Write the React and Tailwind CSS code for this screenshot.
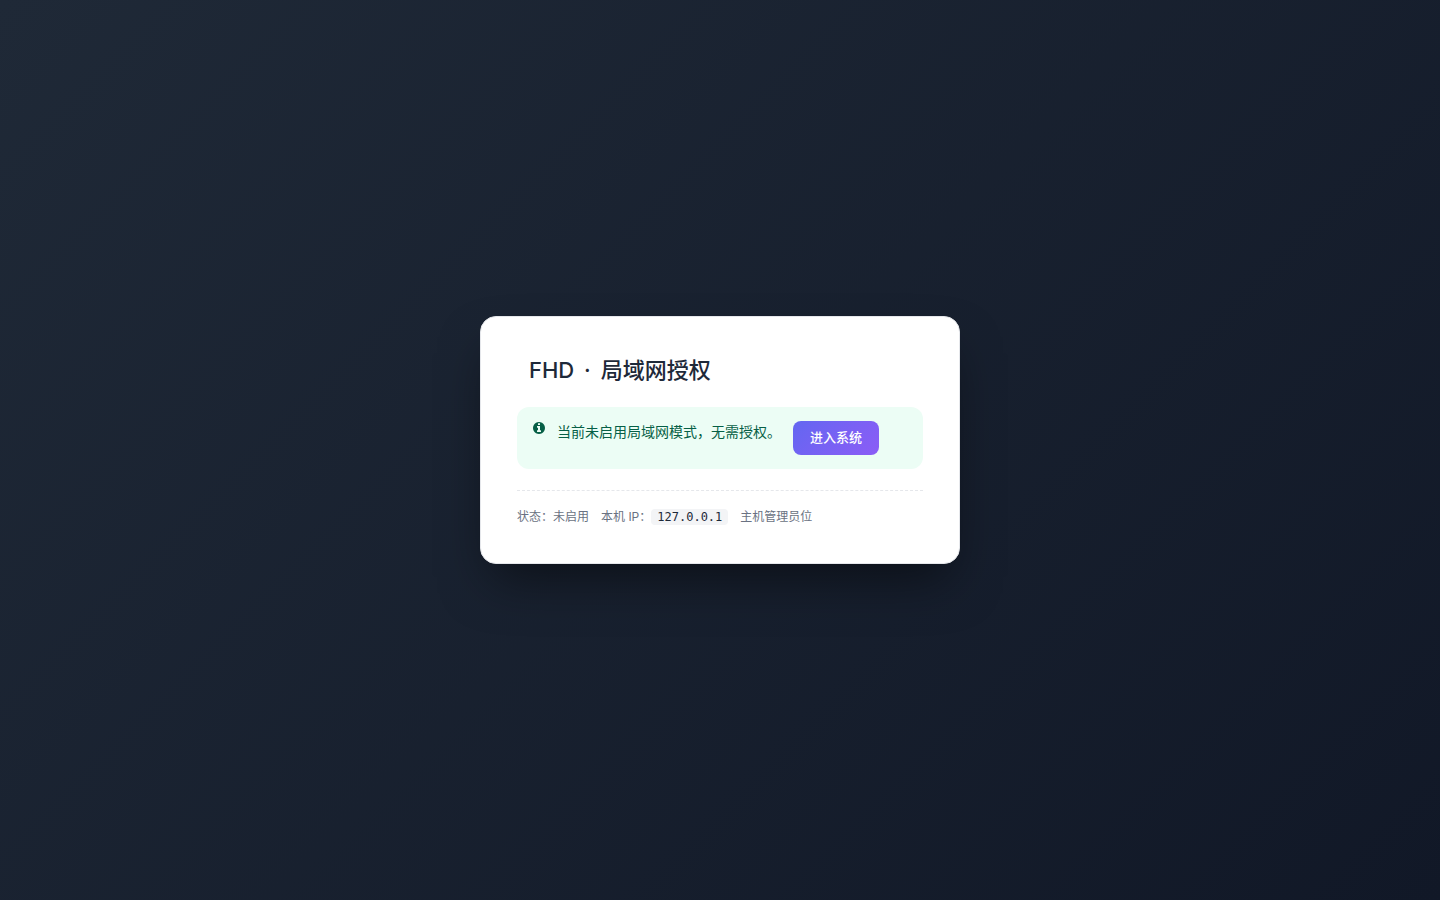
import React from 'react';

function InfoIcon() {
  return (
    <svg viewBox="128 128 1536 1536" className="mt-px h-3 w-3 shrink-0" fill="currentColor" fillRule="evenodd" aria-hidden="true">
      <path d="M1152 1376v-160q0-14-9-23t-23-9h-96v-512q0-14-9-23t-23-9h-320q-14 0-23 9t-9 23v160q0 14 9 23t23 9h96v320h-96q-14 0-23 9t-9 23v160q0 14 9 23t23 9h448q14 0 23-9t9-23zM1024 480v-160q0-14-9-23t-23-9h-192q-14 0-23 9t-9 23v160q0 14 9 23t23 9h192q14 0 23-9t9-23zM1664 896q0 209-103 385.500t-279.500 279.500-385.500 103-385.500-103-279.500-279.500-103-385.500 103-385.500 279.500-279.500 385.500-103 385.500 103 279.500 279.500 103 385.500z" />
    </svg>
  );
}

export default function App() {
  return (
    <div className="flex min-h-screen items-center justify-center bg-[linear-gradient(135deg,#1f2937,#111827)] px-4 pb-5 font-['Inter','Noto_Sans_CJK_SC',sans-serif]">
      <main className="w-full max-w-[480px] rounded-2xl border border-gray-200 bg-white p-9 shadow-2xl shadow-black/50">
        <h1 className="mb-5 pl-3 text-[22px] leading-[34px] font-medium text-gray-800">
          FHD <span className="px-1">·</span> 局域网授权
        </h1>

        <div className="flex items-start gap-3 rounded-xl bg-[#ecfdf5] px-4 py-3.5 text-sm text-[#065f46]">
          <InfoIcon />
          <div className="flex items-start gap-3">
            <span className="leading-[22px]">当前未启用局域网模式，无需授权。</span>
            <button
              type="button"
              className="rounded-lg bg-linear-135 from-[#6366f1] to-[#8b5cf6] px-[17px] pt-1.5 pb-2 text-[13px] leading-5 font-medium text-white"
            >
              进入系统
            </button>
          </div>
        </div>

        <div className="mt-[21px] flex flex-wrap items-center gap-x-3 border-t border-dashed border-gray-200 pt-4 text-xs leading-5 text-gray-500">
          <span>状态：未启用</span>
          <span className="flex items-center">
            本机 IP：
            <code className="rounded bg-gray-100 px-1.5 font-['DejaVu_Sans_Mono',monospace] leading-4 text-gray-800">
              127.0.0.1
            </code>
          </span>
          <span>主机管理员位</span>
        </div>
      </main>
    </div>
  );
}
